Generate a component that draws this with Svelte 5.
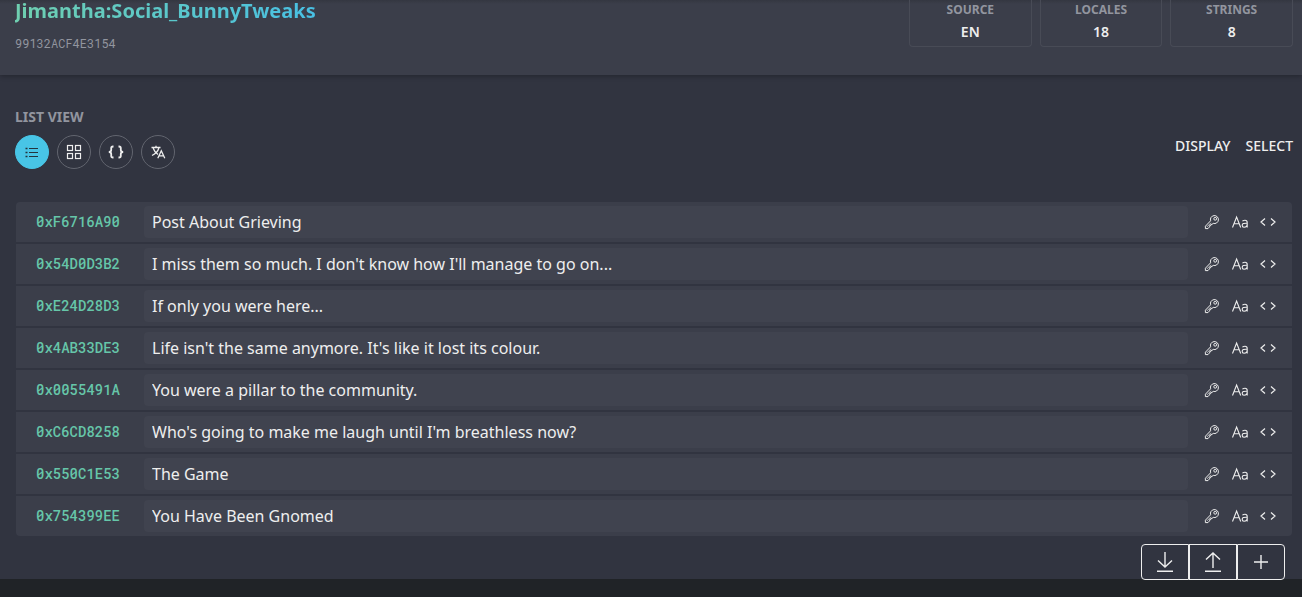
<script lang="ts">
  type View = 'list' | 'grid' | 'json' | 'translate';

  const stats = [
    { label: 'Source', value: 'EN' },
    { label: 'Locales', value: '18' },
    { label: 'Strings', value: '8' },
  ];

  const views: { id: View; title: string }[] = [
    { id: 'list', title: 'List View' },
    { id: 'grid', title: 'Grid View' },
    { id: 'json', title: 'JSON View' },
    { id: 'translate', title: 'Translate View' },
  ];

  let entries = $state([
    { key: '0xF6716A90', value: 'Post About Grieving' },
    { key: '0x54D0D3B2', value: "I miss them so much. I don't know how I'll manage to go on..." },
    { key: '0xE24D28D3', value: 'If only you were here...' },
    { key: '0x4AB33DE3', value: "Life isn't the same anymore. It's like it lost its colour." },
    { key: '0x0055491A', value: 'You were a pillar to the community.' },
    { key: '0xC6CD8258', value: "Who's going to make me laugh until I'm breathless now?" },
    { key: '0x550C1E53', value: 'The Game' },
    { key: '0x754399EE', value: 'You Have Been Gnomed' },
  ]);

  let activeView: View = $state('list');
  let viewTitle = $derived(views.find((view) => view.id === activeView)?.title);

  function copy(text: string) {
    navigator.clipboard?.writeText(text);
  }
</script>

<header class="header">
  <div class="heading">
    <h1 class="title">Jimantha:Social_BunnyTweaks</h1>
    <p class="instance">99132ACF4E3154</p>
  </div>
  <dl class="stats">
    {#each stats as stat}
      <div class="stat">
        <dt>{stat.label}</dt>
        <dd>{stat.value}</dd>
      </div>
    {/each}
  </dl>
</header>

<main class="content">
  <div class="toolbar">
    <div>
      <h2 class="view-title">{viewTitle}</h2>
      <div class="views">
        {#each views as view (view.id)}
          <button
            class="view-btn"
            class:active={activeView === view.id}
            aria-label={view.title}
            onclick={() => (activeView = view.id)}
          >
            {#if view.id === 'list'}
              <svg width="16" height="16" viewBox="0 0 16 16" fill="none" stroke="currentColor">
                <path d="M5 4.5h9M5 8.5h9M5 12.5h9" />
                <path d="M1.5 4.5h2M1.5 8.5h2M1.5 12.5h2" stroke-width="1.6" />
              </svg>
            {:else if view.id === 'grid'}
              <svg width="16" height="16" viewBox="0 0 16 16" fill="none" stroke="currentColor" stroke-width="1.2">
                <rect x="1.5" y="1.5" width="5" height="5" />
                <rect x="9.5" y="1.5" width="5" height="5" />
                <rect x="1.5" y="9.5" width="5" height="5" />
                <rect x="9.5" y="9.5" width="5" height="5" />
              </svg>
            {:else if view.id === 'json'}
              <svg width="16" height="16" viewBox="0 0 16 16" fill="none" stroke="currentColor" stroke-width="1.8">
                <path d="M5.5 2.5H5Q3.2 2.5 3.2 4.3V6Q3.2 8 .8 8Q3.2 8 3.2 10V11.7Q3.2 13.5 5 13.5H5.5" />
                <path d="M10.5 2.5H11Q12.8 2.5 12.8 4.3V6Q12.8 8 15.2 8Q12.8 8 12.8 10V11.7Q12.8 13.5 11 13.5H10.5" />
              </svg>
            {:else}
              <svg width="16" height="16" viewBox="0 0 16 16" fill="none" stroke="currentColor" stroke-width="1.3">
                <path d="M1.5 3.5h9M6 1.8v1.7M3.2 4.2Q4.5 8 8 10.5M8.8 4.2Q7.5 8.7 2 11.5" />
                <path d="M7.8 14.3L11.3 6.8L14.8 14.3M9 11.8h4.6" />
              </svg>
            {/if}
          </button>
        {/each}
      </div>
    </div>
    <div class="menus">
      <button class="menu-btn">Display</button>
      <button class="menu-btn">Select</button>
    </div>
  </div>

  <ul class="entries">
    {#each entries as entry (entry.key)}
      <li class="entry">
        <label class="key" for={entry.key}>{entry.key}</label>
        <input class="value" type="text" id={entry.key} bind:value={entry.value} />
        <div class="tools">
          <button class="tool" aria-label="Copy key" onclick={() => copy(entry.key)}>
            <svg width="16" height="16" viewBox="0 0 16 16" fill="none" stroke="currentColor" stroke-linejoin="round">
              <path d="M6.6 6.8A4 4 0 1 1 9.2 9.4L8 10.4H6.8V11.6H5.6V12.8L4 14.6H1.4V12.2Z" />
              <path d="M7 8.8L2.8 13" stroke-width=".7" />
              <circle cx="11.2" cy="4.8" r="1.4" />
            </svg>
          </button>
          <button class="tool" aria-label="Copy text" onclick={() => copy(entry.value)}>
            <svg width="16" height="16" viewBox="0 0 16 16" fill="none" stroke="currentColor" stroke-width="1.1">
              <path d="M.5 13.5L4.6 3L8.7 13.5M1.9 9.8h5.4" />
              <path d="M10.4 7.2Q11.6 6.2 13 6.2Q15.2 6.2 15.2 8.4V13.5M15.2 9.2Q10.2 9 10.2 11.2Q10.2 13.2 12 13.2Q15.2 13.2 15.2 10" />
            </svg>
          </button>
          <button class="tool" aria-label="Copy XML" onclick={() => copy(`${entry.key}<!--${entry.value}-->`)}>
            <svg width="16" height="16" viewBox="0 0 16 16" fill="none" stroke="currentColor" stroke-width="1.2">
              <path d="M5 4.5L1 8L5 11.5M11 4.5L15 8L11 11.5" />
            </svg>
          </button>
        </div>
      </li>
    {/each}
  </ul>
</main>

<div class="actions">
  <button class="action" aria-label="Download">
    <svg width="20" height="22" viewBox="0 0 20 22" fill="none" stroke="currentColor" stroke-width="1.4">
      <path d="M10 1v15M3 9.5L10 16L17 9.5M2 20.3h16" />
    </svg>
  </button>
  <button class="action" aria-label="Upload">
    <svg width="20" height="22" viewBox="0 0 20 22" fill="none" stroke="currentColor" stroke-width="1.4">
      <path d="M10 17V2M3 8.5L10 2L17 8.5M2 20.3h16" />
    </svg>
  </button>
  <button class="action" aria-label="Add string">
    <svg width="20" height="22" viewBox="0 0 20 22" fill="none" stroke="currentColor" stroke-width="1.4">
      <path d="M10 4v14M3 11h14" />
    </svg>
  </button>
</div>

<style>
  :global(body) {
    background: #202327;
    color: #eeeeee;
    font-family: 'Noto Sans', sans-serif;
  }

  button {
    padding: 0;
    border: none;
    background: none;
    color: inherit;
    font: inherit;
    cursor: pointer;
  }

  svg {
    display: block;
  }

  /* Header */
  .header {
    position: relative;
    display: flex;
    justify-content: space-between;
    align-items: flex-start;
    padding: 0 9px 24px 15px;
    background: linear-gradient(#343741, #3b3e4a 4px);
    box-shadow: 0 1px 5px rgba(0, 0, 0, 0.3);
  }

  .title {
    margin: 0;
    padding-bottom: 4px;
    font-size: 20px;
    line-height: 22px;
    font-weight: 700;
    background: linear-gradient(to right, #6fcfb0, #48c0e4);
    background-clip: text;
    color: transparent;
  }

  .instance {
    margin: 9px 0 0;
    font-family: 'Roboto Mono', 'DejaVu Sans Mono', monospace;
    font-size: 12px;
    line-height: 16px;
    color: #92959f;
  }

  .stats {
    display: grid;
    grid-template-columns: repeat(3, 1fr);
    gap: 8px;
    width: 384px;
    margin: 0;
  }

  .stat {
    box-sizing: border-box;
    height: 47px;
    border: 1px solid #484b56;
    border-top: none;
    border-radius: 0 0 4px 4px;
    text-align: center;
  }

  .stat dt {
    font-size: 12px;
    line-height: 20px;
    font-weight: 700;
    text-transform: uppercase;
    color: #92959f;
  }

  .stat dd {
    margin: 0;
    font-size: 14px;
    line-height: 24px;
    font-weight: 600;
  }

  /* Content */
  .content {
    padding: 32px 9px 43px 15px;
    background: #313440;
  }

  .toolbar {
    display: flex;
    justify-content: space-between;
    align-items: center;
    margin-bottom: 33px;
  }

  .view-title {
    margin: 0 0 8px;
    font-size: 14px;
    line-height: 20px;
    font-weight: 700;
    text-transform: uppercase;
    color: #92959f;
  }

  .views {
    display: flex;
    gap: 8px;
  }

  .view-btn {
    display: flex;
    align-items: center;
    justify-content: center;
    width: 34px;
    height: 34px;
    border: 1px solid #62656f;
    border-radius: 50%;
  }

  .view-btn.active {
    border-color: #48c5e6;
    background: #48c5e6;
    color: #24343d;
  }

  .menus {
    display: flex;
    gap: 15px;
    padding-top: 16px;
  }

  .menu-btn {
    font-size: 14px;
    line-height: 20px;
    font-weight: 500;
    text-transform: uppercase;
  }

  .entries {
    display: flex;
    flex-direction: column;
    gap: 2px;
    margin: 0 1px;
    padding: 0;
    list-style: none;
    border-radius: 4px;
    overflow: hidden;
  }

  .entry {
    display: flex;
    align-items: center;
    height: 40px;
    padding: 0 16px 0 20px;
    background: #3b3e4a;
  }

  .key {
    width: 108px;
    font-family: 'Roboto Mono', 'DejaVu Sans Mono', monospace;
    font-size: 14px;
    line-height: 20px;
    font-weight: 500;
    color: #66c6a9;
  }

  .value {
    flex: 1;
    min-width: 0;
    height: 32px;
    box-sizing: border-box;
    padding: 0 8px;
    border: none;
    border-radius: 4px;
    background: #40434f;
    color: #eeeeee;
    font-family: inherit;
    font-size: 16px;
    font-weight: 400;
  }

  .tools {
    display: flex;
    gap: 12px;
    margin-left: 16px;
  }

  /* Floating actions */
  .actions {
    position: fixed;
    right: 17px;
    bottom: 17px;
    display: flex;
  }

  .action {
    display: flex;
    align-items: center;
    justify-content: center;
    width: 48px;
    height: 36px;
    border: 1px solid #eeeeee;
    background: #313440;
  }

  .action:first-child {
    border-radius: 4px 0 0 4px;
  }

  .action:last-child {
    border-radius: 0 4px 4px 0;
  }
</style>
